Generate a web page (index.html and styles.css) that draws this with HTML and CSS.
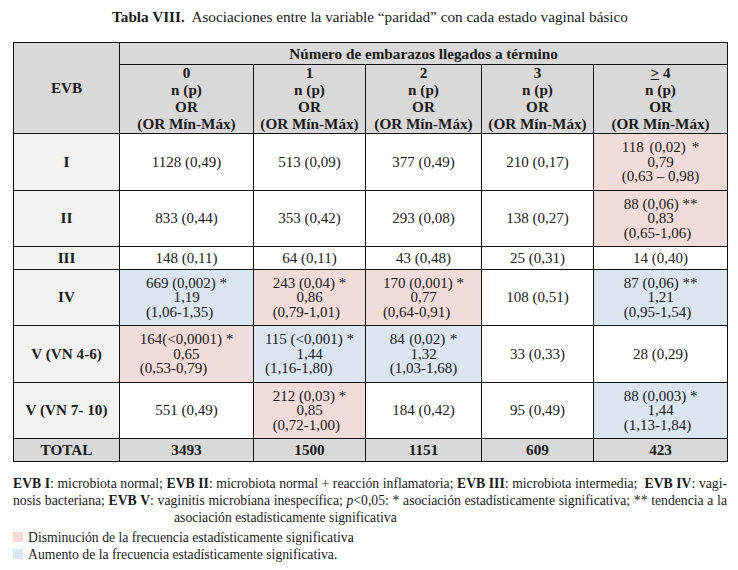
FILE: index.html
```html
<!DOCTYPE html>
<html lang="es">
<head>
<meta charset="utf-8">
<title>Tabla VIII</title>
<link rel="stylesheet" href="styles.css">
</head>
<body>
<div class="page">
  <div class="title"><b>Tabla VIII.</b>&nbsp; Asociaciones entre la variable “paridad” con cada estado vaginal básico</div>
  <table class="tbl">
    <colgroup>
      <col class="c-evb"><col class="c0"><col class="c1"><col class="c2"><col class="c3"><col class="c4">
    </colgroup>
    <thead>
      <tr class="r-h1">
        <th rowspan="2" class="evb-h">EVB</th>
        <th colspan="5" class="span-h">Número de embarazos llegados a término</th>
      </tr>
      <tr class="r-h2">
        <th>0<br>n (p)<br>OR<br>(OR Mín-Máx)</th>
        <th>1<br>n (p)<br>OR<br>(OR Mín-Máx)</th>
        <th>2<br>n (p)<br>OR<br>(OR Mín-Máx)</th>
        <th>3<br>n (p)<br>OR<br>(OR Mín-Máx)</th>
        <th><span class="ge">&gt;</span> 4<br>n (p)<br>OR<br>(OR Mín-Máx)</th>
      </tr>
    </thead>
    <tbody>
      <tr class="r-tall">
        <th class="rh">I</th>
        <td>1128 (0,49)</td>
        <td>513 (0,09)</td>
        <td>377 (0,49)</td>
        <td>210 (0,17)</td>
        <td class="dec"><div class="m"><span>118 (0,02) *</span><span class="mid">0,79</span><span>(0,63 – 0,98)</span></div></td>
      </tr>
      <tr class="r-tall">
        <th class="rh">II</th>
        <td>833 (0,44)</td>
        <td>353 (0,42)</td>
        <td>293 (0,08)</td>
        <td>138 (0,27)</td>
        <td class="dec"><div class="m"><span>88 (0,06) **</span><span class="mid">0,83</span><span>(0,65-1,06)</span></div></td>
      </tr>
      <tr class="r-short">
        <th class="rh">III</th>
        <td>148 (0,11)</td>
        <td>64 (0,11)</td>
        <td>43 (0,48)</td>
        <td>25 (0,31)</td>
        <td>14 (0,40)</td>
      </tr>
      <tr class="r-tall">
        <th class="rh">IV</th>
        <td class="inc"><div class="m"><span>669 (0,002) *</span><span class="mid">1,19</span><span>(1,06-1,35)</span></div></td>
        <td class="dec"><div class="m"><span>243 (0,04) *</span><span class="mid">0,86</span><span>(0,79-1,01)</span></div></td>
        <td class="dec"><div class="m"><span>170 (0,001) *</span><span class="mid">0,77</span><span>(0,64-0,91)</span></div></td>
        <td>108 (0,51)</td>
        <td class="inc"><div class="m"><span>87 (0,06) **</span><span class="mid">1,21</span><span>(0,95-1,54)</span></div></td>
      </tr>
      <tr class="r-tall">
        <th class="rh">V (VN 4-6)</th>
        <td class="dec"><div class="m"><span>164(&lt;0,0001) *</span><span class="mid">0,65</span><span>(0,53-0,79)</span></div></td>
        <td class="inc"><div class="m"><span>115 (&lt;0,001) *</span><span class="mid">1,44</span><span>(1,16-1,80)</span></div></td>
        <td class="inc"><div class="m"><span>84 (0,02) *</span><span class="mid">1,32</span><span>(1,03-1,68)</span></div></td>
        <td>33 (0,33)</td>
        <td>28 (0,29)</td>
      </tr>
      <tr class="r-tall">
        <th class="rh">V (VN 7- 10)</th>
        <td>551 (0,49)</td>
        <td class="dec"><div class="m"><span>212 (0,03) *</span><span class="mid">0,85</span><span>(0,72-1,00)</span></div></td>
        <td>184 (0,42)</td>
        <td>95 (0,49)</td>
        <td class="inc"><div class="m"><span>88 (0,003) *</span><span class="mid">1,44</span><span>(1,13-1,84)</span></div></td>
      </tr>
      <tr class="r-total">
        <th>TOTAL</th>
        <th>3493</th>
        <th>1500</th>
        <th>1151</th>
        <th>609</th>
        <th>423</th>
      </tr>
    </tbody>
  </table>
  <div class="notes">
    <div class="jline"><b>EVB I</b>: microbiota normal; <b>EVB II</b>: microbiota normal + reacción inflamatoria; <b>EVB III</b>: microbiota intermedia;&nbsp; <b>EVB IV</b>: vagi-</div>
    <div class="jline">nosis bacteriana; <b>EVB V</b>: vaginitis microbiana inespecífica; <i>p</i>&lt;0,05: * asociación estadísticamente significativa; ** tendencia a la</div>
    <div class="cline">asociación estadísticamente significativa</div>
  </div>
  <ul class="legend">
    <li><span class="sw sw-dec"></span>Disminución de la frecuencia estadísticamente significativa</li>
    <li><span class="sw sw-inc"></span>Aumento de la frecuencia estadísticamente significativa.</li>
  </ul>
</div>
</body>
</html>
```

FILE: styles.css
```css
html, body {
  margin: 0;
  padding: 0;
  background: #ffffff;
}

body {
  font-family: "Liberation Serif", "Times New Roman", serif;
  color: #1a1a1a;
}

.page {
  width: 714px;
  padding: 8px 0 0 13px;
}

.title {
  text-align: center;
  font-size: 15.2px;
  line-height: 18px;
}

.tbl {
  margin-top: 16px;
  border-collapse: collapse;
  table-layout: fixed;
  width: 714px;
}

.c-evb { width: 106px; }
.c0 { width: 134px; }
.c1 { width: 112px; }
.c2 { width: 116px; }
.c3 { width: 112px; }
.c4 { width: 134px; }

.tbl th,
.tbl td {
  border: 1px solid #111;
  padding: 0;
  text-align: center;
  vertical-align: middle;
}

.tbl thead th {
  background: #d9d9d9;
  font-size: 15.2px;
  font-weight: bold;
  line-height: 16.8px;
}

.tbl .span-h {
  line-height: 20px;
}

.r-h1 { height: 22px; }
.r-h2 { height: 69px; }
.r-tall { height: 56.5px; }
.r-short { height: 22.5px; }
.r-total { height: 22.5px; }

.tbl td {
  font-size: 15px;
  line-height: 14.5px;
  font-weight: normal;
}

.m {
  display: inline-flex;
  flex-direction: column;
}

.m > span {
  display: block;
  text-align: justify;
  text-align-last: justify;
}

.m > .mid {
  text-align-last: center;
}

.tbl .rh {
  background: #f2f2f2;
  font-size: 15.2px;
  font-weight: bold;
}

.r-total th {
  background: #d9d9d9;
  font-size: 15.2px;
  font-weight: bold;
}

.ge {
  text-decoration: underline;
}

.dec { background: #f2dcdb; }
.inc { background: #dce6f1; }

.notes {
  margin-top: 13px;
  font-size: 13.7px;
  line-height: 17px;
}

.jline {
  white-space: nowrap;
  text-align: justify;
  text-align-last: justify;
}

.cline {
  padding-left: 161px;
}

.legend {
  list-style: none;
  margin: 3px 0 0;
  padding: 0;
  font-size: 13.7px;
  line-height: 17px;
}

.legend li {
  display: flex;
  align-items: center;
  gap: 5px;
}

.sw {
  display: inline-block;
  width: 10px;
  height: 10px;
}

.sw-dec { background: #f2dcdb; }
.sw-inc { background: #dce6f1; }
```
